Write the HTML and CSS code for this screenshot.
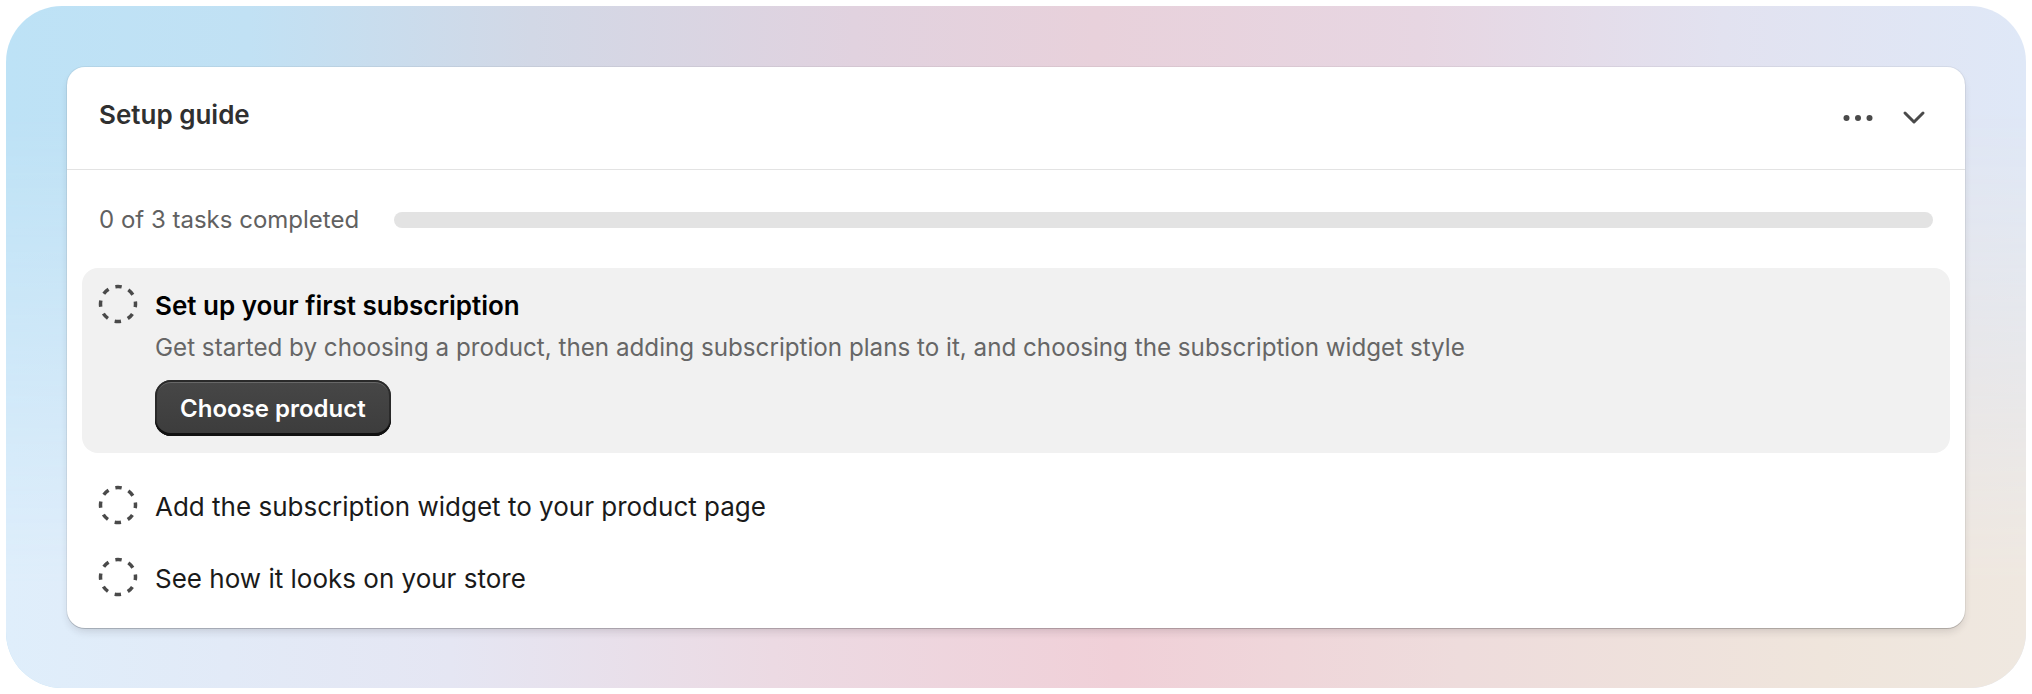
FILE: index.html
```html
<!DOCTYPE html>
<html lang="en">
<head>
<meta charset="utf-8">
<title>Setup guide</title>
<link rel="stylesheet" href="styles.css">
</head>
<body>
<div class="frame">
  <div class="card">
    <div class="card-header">
      <h2 class="title">Setup guide</h2>
      <div class="header-actions">
        <button class="icon-btn" aria-label="More actions">
          <svg width="40" height="40" viewBox="0 0 40 40"><circle cx="8.5" cy="20" r="3" fill="#4a4a4a"/><circle cx="20" cy="20" r="3" fill="#4a4a4a"/><circle cx="31.5" cy="20" r="3" fill="#4a4a4a"/></svg>
        </button>
        <button class="icon-btn" aria-label="Collapse">
          <svg width="40" height="40" viewBox="0 0 40 40"><path d="M11 15l9 9 9-9" fill="none" stroke="#4a4a4a" stroke-width="3" stroke-linecap="round" stroke-linejoin="round"/></svg>
        </button>
      </div>
    </div>
    <div class="card-body">
      <div class="progress-row">
        <span class="progress-text">0 of 3 tasks completed</span>
        <div class="progress-track"><div class="progress-fill" style="width:0%"></div></div>
      </div>
      <ul class="tasks">
        <li class="task task-active">
          <svg class="task-icon" width="40" height="40" viewBox="0 0 40 40"><circle cx="20" cy="20" r="17.5" fill="none" stroke="#4a4a4a" stroke-width="3.5" stroke-dasharray="6.5 7.245" stroke-dashoffset="3.25"/></svg>
          <div class="task-content">
            <div class="task-title strong">Set up your first subscription</div>
            <div class="task-desc">Get started by choosing a product, then adding subscription plans to it, and choosing the subscription widget style</div>
            <button class="primary-btn">Choose product</button>
          </div>
        </li>
        <li class="task">
          <svg class="task-icon" width="40" height="40" viewBox="0 0 40 40"><circle cx="20" cy="20" r="17.5" fill="none" stroke="#4a4a4a" stroke-width="3.5" stroke-dasharray="6.5 7.245" stroke-dashoffset="3.25"/></svg>
          <div class="task-content">
            <div class="task-title">Add the subscription widget to your product page</div>
          </div>
        </li>
        <li class="task">
          <svg class="task-icon" width="40" height="40" viewBox="0 0 40 40"><circle cx="20" cy="20" r="17.5" fill="none" stroke="#4a4a4a" stroke-width="3.5" stroke-dasharray="6.5 7.245" stroke-dashoffset="3.25"/></svg>
          <div class="task-content">
            <div class="task-title">See how it looks on your store</div>
          </div>
        </li>
      </ul>
    </div>
  </div>
</div>
</body>
</html>
```
FILE: styles.css
```css
* { box-sizing: border-box; }
html, body { background: #ffffff; }
body {
  margin: 6px;
  font-family: Inter, "Noto Sans", "Liberation Sans", sans-serif;
  -webkit-font-smoothing: antialiased;
}
.frame {
  position: relative;
  height: 682px;
  padding: 61px;
  border-radius: 56px;
  overflow: hidden;
  background: linear-gradient(90deg, #bde2f6 0%, #c1e1f4 12%, #d2d8e6 26%, #e1d2df 42%, #e8d1db 54%, #e7d6e2 70%, #e2e2f0 85%, #dfe8f7 100%);
}
.frame::before {
  content: "";
  position: absolute;
  inset: 0;
  background: linear-gradient(90deg, #dfeefb 0%, #e5e6f3 22%, #ecdae3 38%, #f0d0d8 55%, #eedcdc 72%, #efe5dc 90%, #efe8e0 100%);
  -webkit-mask-image: linear-gradient(to bottom, transparent 15%, #000 85%);
  mask-image: linear-gradient(to bottom, transparent 15%, #000 85%);
}
.card {
  position: relative;
  background: #ffffff;
  border-radius: 18px;
  box-shadow: 0 0 0 1px rgba(0,0,0,0.05), 0 1px 0 0 rgba(0,0,0,0.14), 0 5px 9px -2px rgba(40,30,40,0.16);
}
.card-header {
  display: flex;
  align-items: center;
  justify-content: space-between;
  height: 103px;
  padding: 0 31px 0 32px;
  border-bottom: 1px solid #e3e3e3;
}
.title {
  margin: 0 0 6px;
  font-size: 26px;
  line-height: 40px;
  font-weight: 600;
  color: #303030;
}
.header-actions {
  display: flex;
  gap: 16px;
}
.icon-btn {
  width: 40px;
  height: 40px;
  padding: 0;
  border: 0;
  background: transparent;
  display: flex;
  align-items: center;
  justify-content: center;
}
.card-body {
  padding: 30px 15px 15px;
}
.progress-row {
  display: flex;
  align-items: center;
  gap: 35px;
  height: 40px;
  padding: 0 17px 0 17px;
  margin-bottom: 28px;
}
.progress-text {
  font-size: 24px;
  line-height: 40px;
  color: #616161;
  white-space: nowrap;
}
.progress-track {
  flex: 1;
  height: 16px;
  border-radius: 8px;
  background: #e3e3e3;
  overflow: hidden;
}
.progress-fill {
  height: 100%;
  background: #303030;
}
.tasks {
  list-style: none;
  margin: 0;
  padding: 0;
  display: flex;
  flex-direction: column;
}
.task {
  display: flex;
  align-items: flex-start;
  gap: 17px;
  padding: 16px;
  border-radius: 16px;
}
.task-active {
  background: #f1f1f1;
  margin-bottom: 16px;
  padding-bottom: 17px;
}
.task-icon { flex: none; display: block; }
.task-content {
  display: flex;
  flex-direction: column;
  align-items: flex-start;
}
.task-title {
  padding-top: 4px;
  font-size: 26px;
  line-height: 36px;
  color: #1a1a1a;
}
.task-title.strong { font-weight: 600; color: #000; }
.task-desc {
  margin-top: 4px;
  font-size: 24.2px;
  line-height: 40px;
  color: #666666;
}
.primary-btn {
  margin-top: 12px;
  height: 56px;
  padding: 0 25px;
  border: 0;
  border-radius: 16px;
  font-family: inherit;
  font-size: 24px;
  font-weight: 600;
  color: #ffffff;
  background: linear-gradient(to bottom, #474747, #3c3c3c);
  box-shadow: inset 0 -3px 0 0 #111, inset 0 0 0 2px #2a2a2a, inset 0 2px 0 1px rgba(255,255,255,0.18);
}
```
